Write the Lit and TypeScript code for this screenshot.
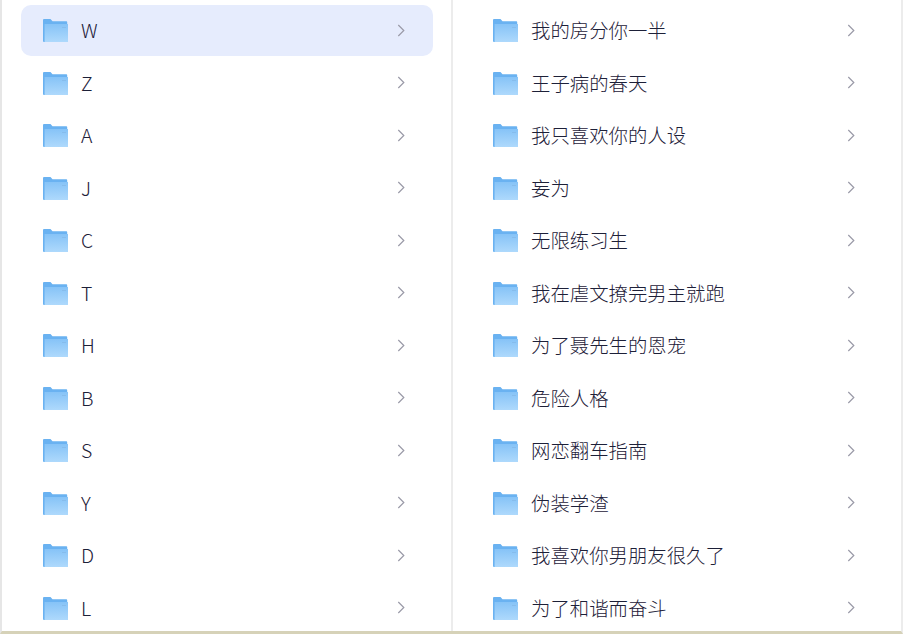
import { LitElement, html, css, svg } from "lit";
import { customElement } from "lit/decorators.js";

const left = ["W", "Z", "A", "J", "C", "T", "H", "B", "S", "Y", "D", "L"];
const right = ["我的房分你一半", "王子病的春天", "我只喜欢你的人设", "妄为", "无限练习生", "我在虐文撩完男主就跑", "为了聂先生的恩宠", "危险人格", "网恋翻车指南", "伪装学渣", "我喜欢你男朋友很久了", "为了和谐而奋斗"];

let uid = 0;
const folder = () => {
  const id = `f${uid++}`;
  return svg`<svg class="folder" viewBox="0 0 25 23" width="25" height="23" aria-hidden="true">
    <defs><linearGradient id=${id} x1="0" y1="0" x2="0" y2="1"><stop offset="0" stop-color="#86c3f7"/><stop offset="1" stop-color="#aed9fc"/></linearGradient></defs>
    <path d="M0 1Q0 0 1 0H7.5L9.5 2.2H23.4Q24.2 2.2 24.2 3V23H1Q0 23 0 22Z" fill="#6ab2f1"/>
    <path d="M1.6 5H25V23H1.6Z" fill="url(#${id})"/>
    <rect x="19" y="8" width="4" height="1" fill="#86bcec"/>
  </svg>`;
};

@customElement("app-root")
export class AppRoot extends LitElement {
  static styles = css`
    :host { display: block; width: 903px; height: 634px; overflow: hidden; background: #fff; font-family: "Noto Sans CJK SC", "Noto Sans", sans-serif; font-weight: 300; color: #1d2038; }
    .frame { display: flex; height: 631px; border-left: 2px solid #e6e6e6; border-right: 2px solid #ececec; border-bottom: 3px solid #d6d2b8; overflow: hidden; }
    .col { flex: none; overflow: hidden; }
    .l { width: 449px; border-right: 2px solid #ececec; }
    .r { width: 448px; }
    ul { list-style: none; margin: 0; padding: 5px 18px 0; }
    .l ul { padding-left: 19px; }
    li { display: flex; align-items: center; height: 51px; margin-bottom: 1.5px; border-radius: 10px; padding: 0 22px; }
    li.on { background: #e6ecfd; }
    .folder { flex: none; margin-right: 13px; }
    .t { flex: 1; font-size: 19.4px; line-height: 1; white-space: nowrap; padding-bottom: 1px; }
    .chev { flex: none; margin-right: 6px; margin-bottom: 1px; }
  `;

  private row(text: string, on = false) {
    return html`<li class=${on ? "on" : ""}>
      ${folder()}
      <span class="t">${text}</span>
      <svg class="chev" width="8" height="13" viewBox="0 0 8 13" aria-hidden="true"><path d="M1.3 1L6.8 6.5L1.3 12" fill="none" stroke="#9a9aa8" stroke-width="1.2"/></svg>
    </li>`;
  }

  render() {
    return html`<div class="frame">
      <div class="col l"><ul>${left.map((t, i) => this.row(t, i === 0))}</ul></div>
      <div class="col r"><ul>${right.map((t) => this.row(t))}</ul></div>
    </div>`;
  }
}
